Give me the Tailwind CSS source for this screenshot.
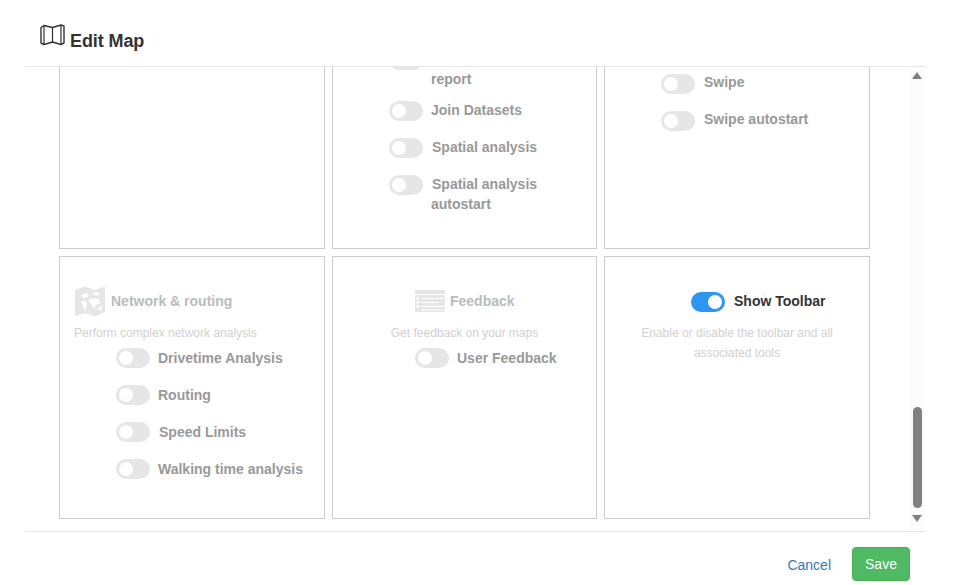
<!DOCTYPE html>
<html>
<head>
  <title>Edit Map</title>
  <script src="https://cdn.jsdelivr.net/npm/@tailwindcss/browser@4"></script>
</head>
<body class="bg-white h-[585px] w-[964px] overflow-hidden font-['Liberation_Sans',Arial,sans-serif]">
  <div class="ml-[25px] w-[900px] h-[585px] flex flex-col">
    <!-- header -->
    <header class="h-[67px] shrink-0 border-b border-[#e5e5e5] flex items-start pl-[15px] pt-[24px]">
      <svg class="w-[25px] h-[22px] shrink-0" viewBox="0 0 25 22" fill="none" stroke="#333" stroke-width="1.4" stroke-linejoin="round">
        <path d="M1 3.5 L4 1.5 L12.5 3.5 L21 1 L24 2 V19 L21 20.5 L12.5 18 L4 20.5 L1 19 Z"/>
        <path d="M4 1.5 V20.5 M12.5 3.5 V18 M21 1 V20.5" stroke-width="1.2"/>
      </svg>
      <h1 class="ml-[5px] mt-[6px] text-[18px] leading-[22px] font-bold text-[#333] tracking-[-0.1px]">Edit Map</h1>
    </header>

    <!-- scrolled body -->
    <div class="h-[464px] shrink-0 flex overflow-hidden">
      <div class="flex-1 pl-[34px] overflow-hidden">
        <div class="-mt-[81px] grid grid-cols-[266px_265px_266px] grid-rows-[263px_263px] gap-x-[7px] gap-y-[7px]">
          <div class="border border-[#ccc]"></div>

          <div class="border border-[#ccc] pl-[56px] pt-[63px] flex flex-col">
            <div class="flex items-start h-[20px]">
              <span class="w-[34px] h-[20px] rounded-full bg-[#e6e6e6] flex items-center pl-[3px]"><span class="w-[14px] h-[14px] rounded-full bg-white"></span></span>
            </div>
            <div class="h-[20px] -mt-[1px] mb-[12px] pl-[42px] text-[14px] leading-[20px] font-bold text-[#999]">report</div>
            <div class="flex items-center h-[20px] mb-[17px]">
              <span class="w-[34px] h-[20px] rounded-full bg-[#e6e6e6] flex items-center pl-[3px] shrink-0"><span class="w-[14px] h-[14px] rounded-full bg-white"></span></span>
              <span class="ml-[8px] -mt-[2px] text-[14px] leading-[20px] font-bold text-[#999]">Join Datasets</span>
            </div>
            <div class="flex items-center h-[20px] mb-[17px]">
              <span class="w-[34px] h-[20px] rounded-full bg-[#e6e6e6] flex items-center pl-[3px] shrink-0"><span class="w-[14px] h-[14px] rounded-full bg-white"></span></span>
              <span class="ml-[9px] -mt-[2px] text-[14px] leading-[20px] font-bold text-[#999]">Spatial analysis</span>
            </div>
            <div class="flex items-center h-[20px]">
              <span class="w-[34px] h-[20px] rounded-full bg-[#e6e6e6] flex items-center pl-[3px] shrink-0"><span class="w-[14px] h-[14px] rounded-full bg-white"></span></span>
              <span class="ml-[9px] -mt-[2px] text-[14px] leading-[20px] font-bold text-[#999]">Spatial analysis</span>
            </div>
            <div class="h-[20px] -mt-[1px] pl-[42px] text-[14px] leading-[20px] font-bold text-[#999]">autostart</div>
          </div>

          <div class="border border-[#ccc] pl-[56px] pt-[87px] flex flex-col">
            <div class="flex items-center h-[20px] mb-[17px]">
              <span class="w-[34px] h-[20px] rounded-full bg-[#e6e6e6] flex items-center pl-[3px] shrink-0"><span class="w-[14px] h-[14px] rounded-full bg-white"></span></span>
              <span class="ml-[9px] -mt-[4px] text-[14px] leading-[20px] font-bold text-[#999]">Swipe</span>
            </div>
            <div class="flex items-center h-[20px]">
              <span class="w-[34px] h-[20px] rounded-full bg-[#e6e6e6] flex items-center pl-[3px] shrink-0"><span class="w-[14px] h-[14px] rounded-full bg-white"></span></span>
              <span class="ml-[9px] -mt-[4px] text-[14px] leading-[20px] font-bold text-[#999]">Swipe autostart</span>
            </div>
          </div>

          <!-- network -->
          <div class="border border-[#ccc] pt-[29px] flex flex-col">
            <div class="flex items-center h-[30px] pl-[15px]">
              <svg class="w-[31px] h-[31px] shrink-0" viewBox="0 0 31 31">
                <path fill="#e6e6e6" d="M0 4 L10 0.5 L20 4 L30 0.5 V26 L20 30.5 L10 27 L0 30.5 Z"/>
                <path fill="#fff" d="M6 9 L11 7 L14 9 L11 12 L8 12 Z M17 7 L22 6 L25 8 L21 10 Z M14 13 L19 12 L24 13 L25 17 L21 19 L19 23 L17 19 L14 16 Z M6 15 L11 15 L12 19 L10 25 L8 20 Z M24 21 L27 20 L26 24 L23 24 Z"/>
              </svg>
              <span class="ml-[5px] text-[14px] font-bold text-[#b9bcbe]">Network &amp; routing</span>
            </div>
            <p class="mt-[7px] pl-[14px] text-[12px] leading-[20px] text-[#d4d0d0]">Perform complex network analysis</p>
            <div class="mt-[5px] pl-[56px] flex flex-col gap-[17px]">
              <div class="flex items-center h-[20px]">
                <span class="w-[34px] h-[20px] rounded-full bg-[#e6e6e6] flex items-center pl-[3px] shrink-0"><span class="w-[14px] h-[14px] rounded-full bg-white"></span></span>
                <span class="ml-[8px] text-[14px] leading-[20px] font-bold text-[#999]">Drivetime Analysis</span>
              </div>
              <div class="flex items-center h-[20px]">
                <span class="w-[34px] h-[20px] rounded-full bg-[#e6e6e6] flex items-center pl-[3px] shrink-0"><span class="w-[14px] h-[14px] rounded-full bg-white"></span></span>
                <span class="ml-[8px] text-[14px] leading-[20px] font-bold text-[#999]">Routing</span>
              </div>
              <div class="flex items-center h-[20px]">
                <span class="w-[34px] h-[20px] rounded-full bg-[#e6e6e6] flex items-center pl-[3px] shrink-0"><span class="w-[14px] h-[14px] rounded-full bg-white"></span></span>
                <span class="ml-[9px] text-[14px] leading-[20px] font-bold text-[#999]">Speed Limits</span>
              </div>
              <div class="flex items-center h-[20px]">
                <span class="w-[34px] h-[20px] rounded-full bg-[#e6e6e6] flex items-center pl-[3px] shrink-0"><span class="w-[14px] h-[14px] rounded-full bg-white"></span></span>
                <span class="ml-[8px] text-[14px] leading-[20px] font-bold text-[#999]">Walking time analysis</span>
              </div>
            </div>
          </div>

          <!-- feedback -->
          <div class="border border-[#ccc] pt-[29px] flex flex-col">
            <div class="flex items-center h-[30px] pl-[82px]">
              <svg class="w-[30px] h-[22px] shrink-0" viewBox="0 0 30 22">
                <rect width="30" height="22" fill="#e6e6e6"/>
                <path stroke="#fff" stroke-width="1" d="M0 4.5 H30 M6 8.5 H30 M6 12.5 H24 M6 16.5 H30 M6 20 H30"/>
                <path fill="#fff" d="M1.500 7 h2.500 v2.500 h-2.500 z M1.500 11 h2.500 v2.500 h-2.500 z M1.500 15 h2.500 v2.500 h-2.500 z"/>
              </svg>
              <span class="ml-[5px] text-[14px] font-bold text-[#b9bcbe]">Feedback</span>
            </div>
            <p class="mt-[7px] text-center text-[12px] leading-[20px] text-[#d4d0d0]">Get feedback on your maps</p>
            <div class="mt-[5px] pl-[82px] flex items-center h-[20px]">
              <span class="w-[34px] h-[20px] rounded-full bg-[#e6e6e6] flex items-center pl-[3px] shrink-0"><span class="w-[14px] h-[14px] rounded-full bg-white"></span></span>
              <span class="ml-[8px] text-[14px] leading-[20px] font-bold text-[#999]">User Feedback</span>
            </div>
          </div>

          <!-- toolbar -->
          <div class="border border-[#ccc] pt-[35px] flex flex-col">
            <div class="pl-[86px] flex items-center h-[20px]">
              <span class="w-[34px] h-[20px] rounded-full bg-[#2d96f3] flex items-center justify-end pr-[3px] shrink-0"><span class="w-[14px] h-[14px] rounded-full bg-white"></span></span>
              <span class="ml-[9px] -mt-[2px] text-[14px] leading-[20px] font-bold text-[#333]">Show Toolbar</span>
            </div>
            <p class="mt-[11px] px-[30px] text-center text-[12px] leading-[20px] text-[#d4d0d0]">Enable or disable the toolbar and all associated tools</p>
          </div>
        </div>
      </div>

      <!-- scrollbar -->
      <div class="w-[16px] h-[464px] shrink-0 bg-[#fcfcfc] flex flex-col items-center relative">
        <span class="mt-[5px] w-0 h-0 border-x-[5px] border-x-transparent border-b-[7px] border-b-[#808080]"></span>
        <span class="absolute top-[340px] left-[4px] w-[9px] h-[101px] rounded-full bg-[#808080]"></span>
        <span class="absolute bottom-[9px] left-[3px] w-0 h-0 border-x-[5px] border-x-transparent border-t-[7px] border-t-[#808080]"></span>
      </div>
    </div>

    <!-- footer -->
    <footer class="flex-1 border-t border-[#e5e5e5] flex items-start justify-end pr-[15px] pt-[15px]">
      <a href="#" class="mt-[8px] mr-[21px] text-[14px] leading-[20px] text-[#337ab7]">Cancel</a>
      <button class="w-[58px] h-[34px] rounded-[4px] bg-[#4fb964] border border-[#4cae4c] text-white text-[14px]">Save</button>
    </footer>
  </div>
</body>
</html>
